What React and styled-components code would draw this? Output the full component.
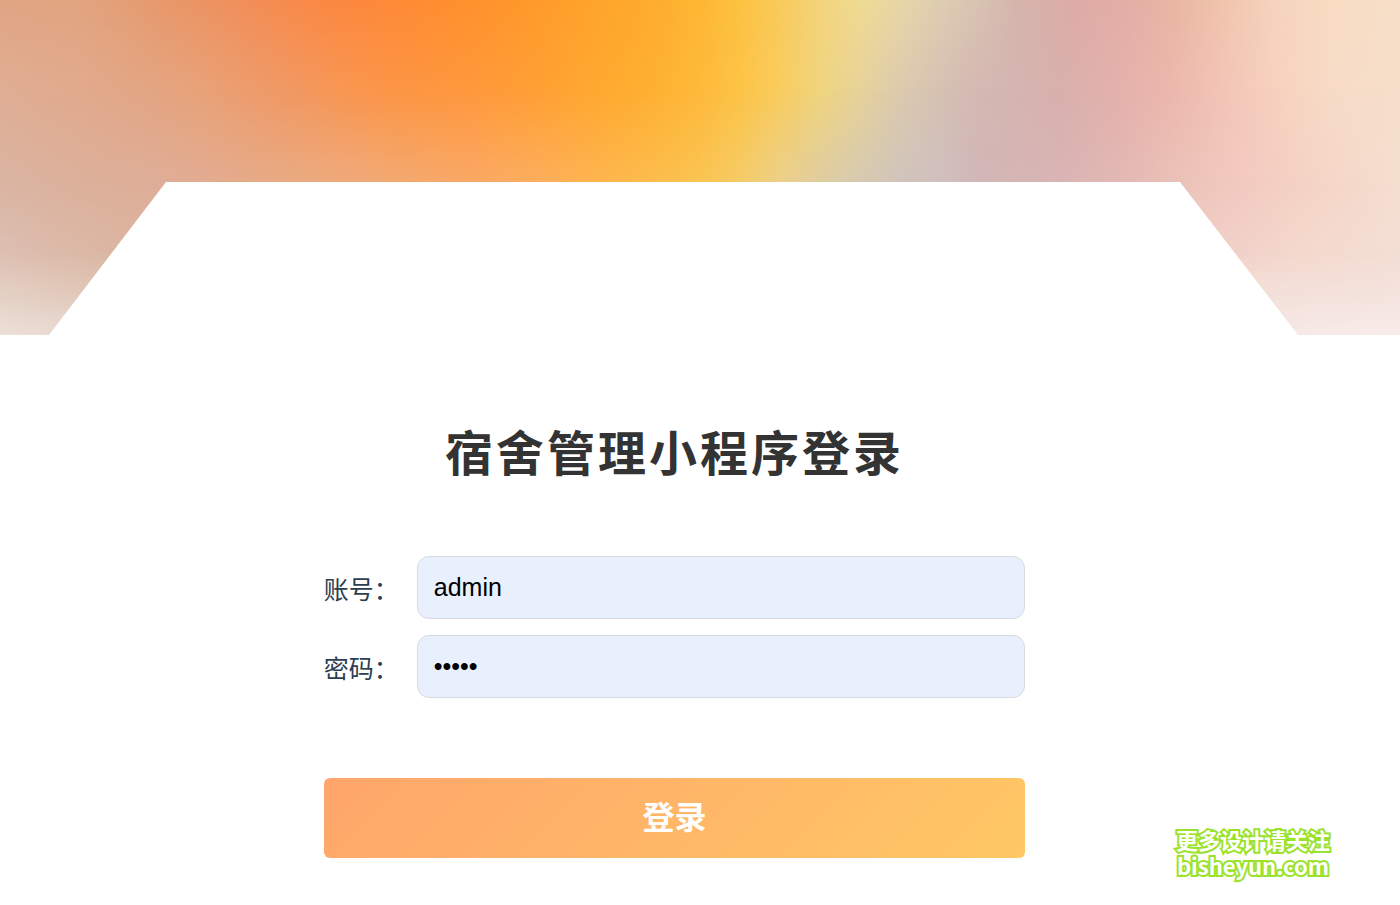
import React, { useState } from "react";

import styled, { createGlobalStyle } from "styled-components";

// Colour stops of the banner, one list per row: [x, colour]
const rows = [
  {
    y: 0,
    stops: [
      [0, "#e0a583"], [80, "#e2a480"], [120, "#e49f76"], [160, "#e7996b"],
      [200, "#ec9464"], [250, "#f28e58"], [300, "#f98a49"], [340, "#fc8840"],
      [400, "#ff8a36"], [450, "#ff8f2e"], [500, "#ff952c"], [560, "#ff9f2b"],
      [640, "#feaa2d"], [700, "#feb733"], [740, "#fdc242"], [780, "#f9cb5c"],
      [820, "#f4d47c"], [860, "#f0db92"], [900, "#e8d6a8"], [940, "#dfcdb2"],
      [980, "#d8c2b2"], [1020, "#d5b4ac"], [1080, "#dfaba6"], [1130, "#e4aea6"],
      [1180, "#eab8a4"], [1220, "#f0c4ac"], [1270, "#f6d2bc"], [1330, "#f8dcc2"],
      [1400, "#f7dfc8"],
    ],
  },
  {
    y: 90,
    stops: [
      [0, "#dfae94"], [80, "#e1aa8d"], [150, "#e3a583"], [200, "#e8a278"],
      [250, "#ed9c6c"], [300, "#f29860"], [350, "#f99650"], [400, "#fc9544"],
      [467, "#ff983c"], [540, "#ffa034"], [600, "#ffa930"], [650, "#feb032"],
      [700, "#feb93a"], [740, "#fcc346"], [780, "#f9cc5e"], [820, "#f0d47e"],
      [860, "#e6d29a"], [900, "#dccaae"], [940, "#d5c1b2"], [980, "#d4b8b2"],
      [1020, "#d5b4b0"], [1060, "#d8b0ac"], [1120, "#e4b1ac"], [1170, "#ecb7ac"],
      [1230, "#f3c6b8"], [1290, "#f8d4c0"], [1340, "#f7dcc8"], [1400, "#f5dfca"],
    ],
  },
  {
    y: 180,
    stops: [
      [0, "#dab4a2"], [80, "#dcb09a"], [150, "#deae98"], [200, "#e2ac92"],
      [250, "#e6aa88"], [300, "#eaaa80"], [350, "#f0a97a"], [400, "#f3a96e"],
      [467, "#faa766"], [540, "#fdae5a"], [600, "#feb44e"], [660, "#fcbd4c"],
      [700, "#fac452"], [740, "#f5cb66"], [780, "#ecd088"], [820, "#e0cda0"],
      [860, "#d6cab0"], [900, "#d0c4ba"], [940, "#d0bfc0"], [980, "#d2b6b6"],
      [1060, "#d9b4b4"], [1120, "#e3b8b4"], [1180, "#ebc2b8"], [1240, "#f3c9c0"],
      [1300, "#f4d2c4"], [1400, "#f5dfd0"],
    ],
  },
  {
    y: 250,
    stops: [
      [0, "#dcbfb2"], [50, "#dcbaaa"], [120, "#dbb5a0"], [1230, "#f0d0c8"],
      [1300, "#f4d8cc"], [1400, "#f3ded4"],
    ],
  },
  {
    y: 290,
    stops: [[0, "#e3cfc2"], [90, "#e0c6b6"], [1260, "#f3dfd8"], [1400, "#f4e2dc"]],
  },
  {
    y: 335,
    stops: [[0, "#ecdfd8"], [50, "#e9dcd4"], [1290, "#f6e8e6"], [1400, "#f8ecea"]],
  },
];

const Banner = () => (
  <BannerArt viewBox="0 0 1400 335" preserveAspectRatio="none" aria-hidden="true">
    <defs>
      {rows.map((row, i) => (
        <React.Fragment key={row.y}>
          <linearGradient id={`row${i}`} gradientUnits="userSpaceOnUse" x1="0" y1="0" x2="1400" y2="0">
            {row.stops.map(([x, color]) => (
              <stop key={x} offset={x / 1400} stopColor={color} />
            ))}
          </linearGradient>
          {i > 0 && (
            <>
              <linearGradient id={`fade${i}`} gradientUnits="userSpaceOnUse" x1="0" y1={rows[i - 1].y} x2="0" y2={row.y}>
                <stop offset="0" stopColor="#fff" stopOpacity="0" />
                <stop offset="1" stopColor="#fff" />
              </linearGradient>
              <mask id={`mask${i}`} maskUnits="userSpaceOnUse" x="0" y="0" width="1400" height="335">
                <rect width="1400" height="335" fill={`url(#fade${i})`} />
              </mask>
            </>
          )}
        </React.Fragment>
      ))}
    </defs>
    {rows.map((row, i) => (
      <rect
        key={row.y}
        width="1400"
        height="335"
        fill={`url(#row${i})`}
        mask={i > 0 ? `url(#mask${i})` : undefined}
      />
    ))}
    <path d="M49 335 L166 182 H1180 L1298 335 Z" fill="#fff" />
  </BannerArt>
);

export default function App() {
  const [username, setUsername] = useState("admin");
  const [password, setPassword] = useState("admin");

  return (
    <Page>
      <GlobalStyle />
      <Banner />
      <Main>
        <Title>宿舍管理小程序登录</Title>
        <Form onSubmit={(e) => e.preventDefault()}>
          <Field>
            <Label htmlFor="username">账号：</Label>
            <Input
              id="username"
              type="text"
              value={username}
              onChange={(e) => setUsername(e.target.value)}
            />
          </Field>
          <Field>
            <Label htmlFor="password">密码：</Label>
            <Input
              id="password"
              type="password"
              value={password}
              onChange={(e) => setPassword(e.target.value)}
            />
          </Field>
          <Submit type="submit">登录</Submit>
        </Form>
      </Main>
      <Watermark>
        更多设计请关注
        <br />
        bisheyun.com
      </Watermark>
    </Page>
  );
}

const GlobalStyle = createGlobalStyle`
  * {
    box-sizing: border-box;
  }
  body {
    margin: 0;
    background: #fff;
    font-family: "Noto Sans CJK SC", sans-serif;
  }
`;

const Page = styled.div`
  position: relative;
  min-height: 100vh;
`;

const BannerArt = styled.svg`
  display: block;
  width: 100%;
  height: 335px;
`;

const Main = styled.main`
  display: flex;
  flex-direction: column;
  align-items: center;
  padding: 80px 51px 40px 0;
`;

const Title = styled.h1`
  margin: 0;
  font-size: 48px;
  font-weight: 700;
  line-height: 70px;
  letter-spacing: 3px;
  color: #333;
`;

const Form = styled.form`
  display: flex;
  flex-direction: column;
  gap: 16px;
  width: 52%;
  margin-top: 71px;
`;

const Field = styled.div`
  display: flex;
  align-items: center;
`;

const Label = styled.label`
  width: 93px;
  font-size: 25px;
  line-height: 38px;
  color: #2c3e50;
`;

const Input = styled.input`
  flex: 1;
  min-width: 0;
  height: 63px;
  padding: 0 16px;
  border: 1px solid #d9dadd;
  border-radius: 12px;
  outline: none;
  background: #e8effd;
  color: #000;
  font-family: "Liberation Sans", Arial, sans-serif;
  font-size: 25px;
`;

const Submit = styled.button`
  height: 80px;
  margin-top: 64px;
  padding: 0 0 6px;
  border: none;
  border-radius: 6px;
  background: linear-gradient(135deg, #ffa56b, #ffc864);
  color: #fff;
  font-family: inherit;
  font-size: 32px;
  font-weight: 700;
  cursor: pointer;
`;

const Watermark = styled.div`
  position: absolute;
  right: 70px;
  bottom: 27px;
  font-size: 22px;
  font-weight: 700;
  line-height: 26px;
  text-align: center;
  color: #fff;
  paint-order: stroke fill;
  -webkit-text-stroke: 4px #9be22d;
`;
